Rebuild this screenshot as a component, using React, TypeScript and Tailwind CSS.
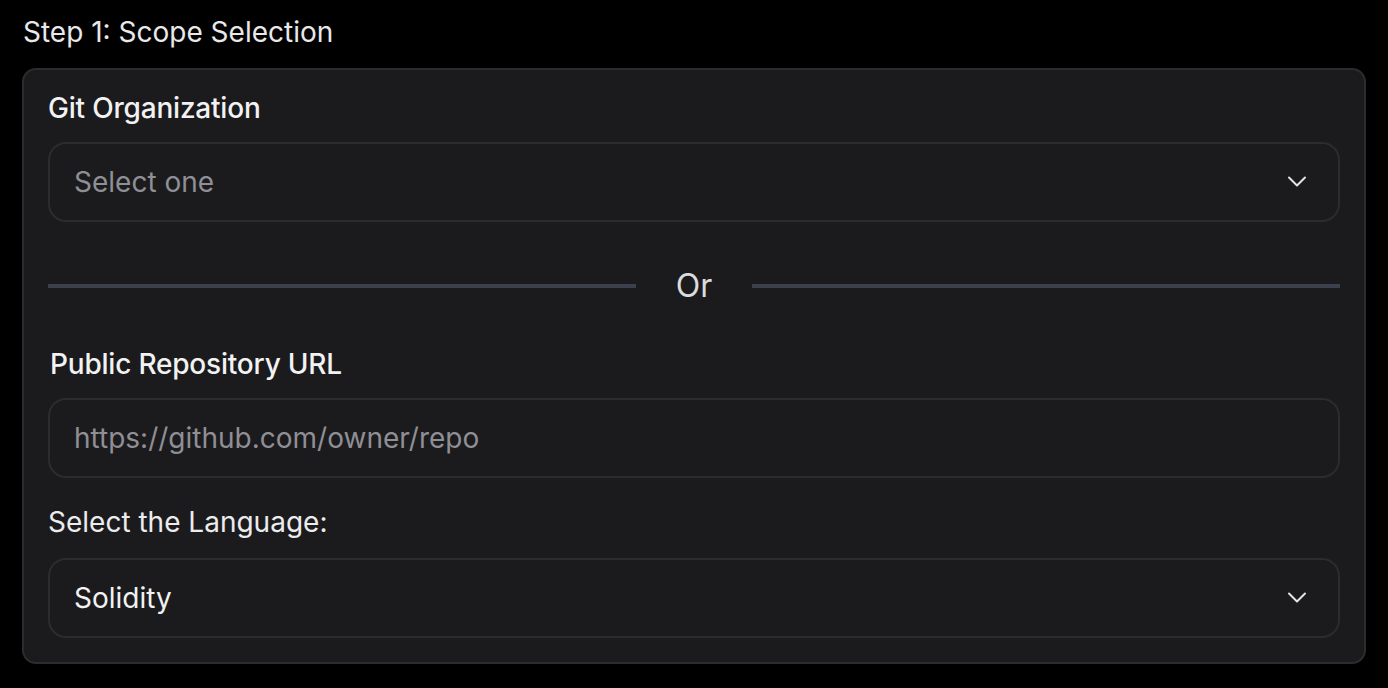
import React from "react";

function Chevron() {
  return (
    <svg width="20" height="12" viewBox="0 0 20 12" fill="none" className="shrink-0">
      <path d="M2 1.5 L10 9.5 L18 1.5" stroke="#e4e4e7" strokeWidth="2" strokeLinecap="round" strokeLinejoin="round" />
    </svg>
  );
}

export default function App() {
  return (
    <div
      className="w-full h-[688px] bg-black px-[22px] pt-[12px] overflow-hidden"
      style={{ fontFamily: "Inter, 'Noto Sans', sans-serif" }}
    >
      <div className="text-[28px] leading-[40px] text-[#e8e8ea] pl-[1px]">Step 1: Scope Selection</div>
      <div className="mt-[16px] rounded-[14px] border-2 border-[#2c2c2f] bg-[#1b1b1d] px-[24px] pt-[18px] pb-[24px]">
        <div className="text-[28px] leading-[40px] font-medium tracking-[-0.2px] text-[#f2f2f3]">Git Organization</div>
        <div className="mt-[14px] h-[80px] rounded-[18px] border-2 border-[#2c2c2f] flex items-center justify-between pl-[24px] pr-[31px]">
          <span className="text-[28px] text-[#8f8f95]">Select one</span>
          <Chevron />
        </div>
        <div className="mt-[44px] h-[40px] flex items-center">
          <div className="flex-1 h-[4px] bg-[#3a404c]" />
          <div className="w-[116px] text-center text-[32px] leading-[40px] text-[#dcdcdf]">Or</div>
          <div className="flex-1 h-[4px] bg-[#3a404c]" />
        </div>
        <div className="mt-[38px] pl-[2px] text-[28px] leading-[40px] font-medium tracking-[-0.2px] text-[#f2f2f3]">Public Repository URL</div>
        <div className="mt-[14px] h-[80px] rounded-[18px] border-2 border-[#2c2c2f] flex items-center pl-[24px] pr-[31px]">
          <span className="text-[28px] text-[#8f8f95]">https://github.com/owner/repo</span>
        </div>
        <div className="mt-[24px] text-[28px] leading-[40px] text-[#ececee]">Select the Language:</div>
        <div className="mt-[16px] h-[80px] rounded-[18px] border-2 border-[#2c2c2f] flex items-center justify-between pl-[24px] pr-[31px]">
          <span className="text-[28px] text-[#f2f2f3]">Solidity</span>
          <Chevron />
        </div>
      </div>
    </div>
  );
}
